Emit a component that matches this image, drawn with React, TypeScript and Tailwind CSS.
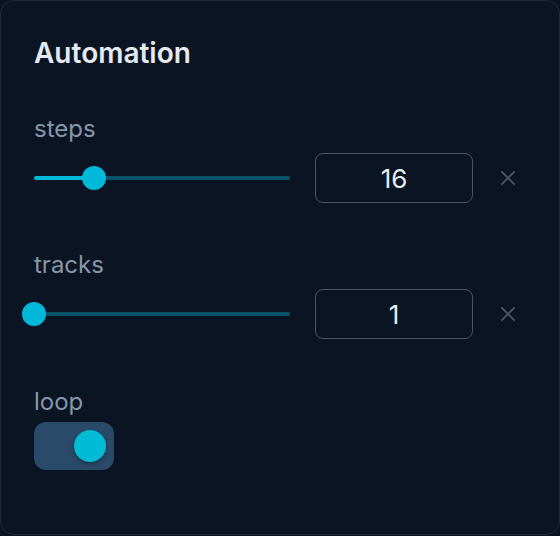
import React from "react";

const font = { fontFamily: "Inter, 'Noto Sans', sans-serif" };

function Slider({ pct }: { pct: number }) {
  return (
    <div className="relative h-6 w-[256px] flex items-center">
      <div className="h-1 w-full rounded-full bg-[#0a5368]" />
      <div
        className="absolute left-0 h-1 rounded-full bg-[#00b8d9]"
        style={{ width: `${pct}%` }}
      />
      <div
        className="absolute h-6 w-6 -ml-3 rounded-full bg-[#00b8d9]"
        style={{ left: `${pct}%` }}
      />
    </div>
  );
}

function NumberRow({ label, value, pct }: { label: string; value: string; pct: number }) {
  return (
    <div>
      <div className="text-[24px] leading-8 text-[#8797ab] mb-2">{label}</div>
      <div className="flex items-center">
        <Slider pct={pct} />
        <div className="ml-[25px] h-[50px] w-[158px] rounded-lg border border-[#4a5563] flex items-center justify-center text-[26px] text-[#e8edf3]">
          {value}
        </div>
        <svg className="ml-[27px]" width="16" height="16" viewBox="0 0 16 16" fill="none" stroke="#4b5563" strokeWidth="1.8" strokeLinecap="round">
          <path d="M2 2L14 14M14 2L2 14" />
        </svg>
      </div>
    </div>
  );
}

export default function App() {
  return (
    <div className="w-[560px] h-[536px] bg-[#0b1422]" style={font}>
      <div className="h-[535px] w-full rounded-[14px] border border-[#1c2a3c] bg-[#0b1422] pl-[33px] pt-[34px]">
        <h2 className="text-[28px] leading-9 font-semibold text-[#e5e9f0]">Automation</h2>
        <div className="mt-[42px]">
          <NumberRow label="steps" value="16" pct={23.4} />
        </div>
        <div className="mt-[46px]">
          <NumberRow label="tracks" value="1" pct={0} />
        </div>
        <div className="mt-[47px]">
          <div className="text-[24px] leading-8 text-[#8797ab] mb-1">loop</div>
          <div className="h-12 w-20 rounded-xl bg-[#2a4a69] flex items-center justify-end pr-2">
            <div className="h-8 w-8 rounded-full bg-[#00bbd6] shadow-[0_2px_4px_rgba(0,0,0,0.35)]" />
          </div>
        </div>
      </div>
    </div>
  );
}
